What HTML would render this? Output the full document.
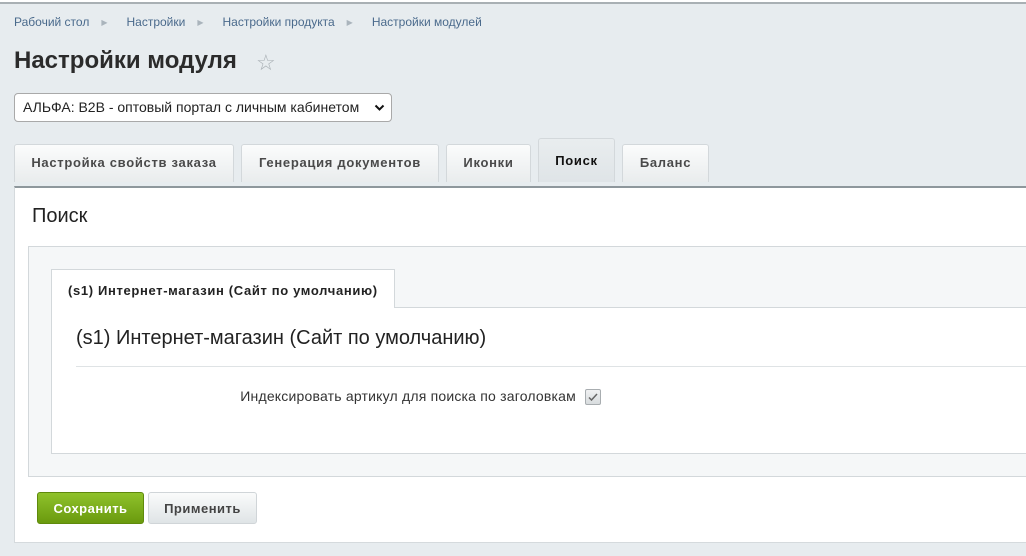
<!DOCTYPE html>
<html><head><meta charset="utf-8"><style>
*{box-sizing:border-box;margin:0;padding:0}
body{width:1026px;height:556px;overflow:hidden;background:#e7ecef;font-family:"Liberation Sans",Arial,sans-serif;position:relative;color:#333}
.topline{position:absolute;left:0;top:0;width:1026px;height:4px;background:#fff;border-bottom:2px solid #a9b0b4}
.bc{position:absolute;top:15px;left:14px;font-size:12px;color:#4a6a8c;white-space:nowrap}
.bc span{margin-right:12px}
.bc i{font-style:normal;color:#aab4bc;font-size:8px;margin-right:19px;position:relative;top:-1px}
h1{position:absolute;left:14px;top:47px;font-size:24px;font-weight:bold;color:#2b2b2b}
.star{position:absolute;left:256px;top:50px;font-size:22px;color:#a9b0b5}
.sel{position:absolute;left:14px;top:93px;width:378px;height:29px;background:#fff;border:1px solid #a9a9a9;border-radius:4px;font-size:14px;padding:5px 8px;color:#222}
.sel svg{position:absolute;right:6px;top:10px}
.tab{position:absolute;top:144px;height:38px;background:linear-gradient(#fbfcfc,#e9eced);border:1px solid #d3d8db;border-bottom:none;border-radius:3px 3px 0 0;font-size:13px;font-weight:bold;color:#4a4a4a;text-align:center;line-height:36px;letter-spacing:0.7px}
.tab.a{top:138px;height:44px;background:linear-gradient(#e9edef,#dfe4e7);color:#111;line-height:44px}
.panel{position:absolute;left:14px;top:186px;width:1012px;height:357px;background:#fff;border-top:2px solid #8e979c;border-left:1px solid #d5dadd;border-bottom:1px solid #d5dadd}
.ptitle{position:absolute;left:32px;top:205px;font-size:20px;color:#222}
.band{position:absolute;left:28px;top:246px;width:998px;height:231px;background:#f5f7f8;border:1px solid #d3d8db;border-right:none}
.itab{position:absolute;left:51px;top:269px;width:344px;height:39px;background:#fff;border:1px solid #d3d8db;border-bottom:none;font-size:13px;font-weight:bold;color:#222;padding:13px 0 0 16px;letter-spacing:0.65px;white-space:nowrap}
.ibox{position:absolute;left:51px;top:307px;width:975px;height:147px;background:#fff;border:1px solid #d3d8db;border-right:none}
.ibox:before{content:"";position:absolute;left:0;top:-1px;width:343px;height:1px;background:#fff}
.ih{position:absolute;left:76px;top:327px;font-size:20px;color:#222}
.hr{position:absolute;left:76px;top:366px;width:950px;height:1px;background:#dfe3e5}
.lbl{position:absolute;right:450px;top:388px;font-size:14px;color:#333;letter-spacing:0.2px}
.cb{position:absolute;left:585px;top:389px;width:16px;height:16px;border:1px solid #a8adb0;border-radius:2px;background:linear-gradient(#f0f1f2,#d8dcde)}
.btn{position:absolute;top:492px;height:32px;border-radius:3px;font-size:13px;font-weight:bold;text-align:center;line-height:31px;letter-spacing:0.5px}
.save{left:37px;width:107px;background:linear-gradient(#8fc22b,#6a9a0e);color:#fff;border:1px solid #5f8a0c}
.apply{left:148px;width:109px;background:linear-gradient(#fafbfb,#dfe4e6);color:#444;border:1px solid #d0d5d8}
</style></head><body>
<div class="topline"></div>
<div class="bc"><span>Рабочий стол</span><i>▶</i><span>Настройки</span><i>▶</i><span>Настройки продукта</span><i>▶</i><span>Настройки модулей</span></div>
<h1>Настройки модуля</h1>
<div class="star">☆</div>
<div class="sel">АЛЬФА: B2B - оптовый портал с личным кабинетом<svg width="11" height="8" viewBox="0 0 11 8"><path d="M1.5 1.5l4 4 4-4" fill="none" stroke="#111" stroke-width="2"/></svg></div>
<div class="tab" style="left:14px;width:220px">Настройка свойств заказа</div>
<div class="tab" style="left:241px;width:198px">Генерация документов</div>
<div class="tab" style="left:446px;width:85px">Иконки</div>
<div class="tab a" style="left:538px;width:77px">Поиск</div>
<div class="tab" style="left:622px;width:87px">Баланс</div>
<div class="panel"></div>
<div class="ptitle">Поиск</div>
<div class="band"></div>
<div class="ibox"></div>
<div class="itab">(s1) Интернет-магазин (Сайт по умолчанию)</div>
<div class="ih">(s1) Интернет-магазин (Сайт по умолчанию)</div>
<div class="hr"></div>
<div class="lbl">Индексировать артикул для поиска по заголовкам</div>
<div class="cb"><svg width="14" height="14" viewBox="0 0 14 14"><path d="M3 7.5l2.5 2.5L11 4" fill="none" stroke="#666" stroke-width="1.5"/></svg></div>
<div class="btn save">Сохранить</div>
<div class="btn apply">Применить</div>
</body></html>
